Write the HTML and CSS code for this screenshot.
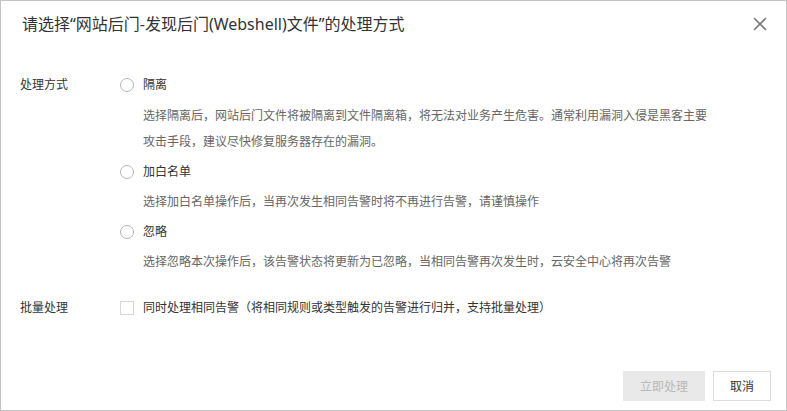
FILE: index.html
```html
<!DOCTYPE html>
<html lang="zh-CN">
<head>
<meta charset="utf-8">
<title>处理方式</title>
<link rel="stylesheet" href="styles.css">
</head>
<body>
<div class="dialog">
  <div class="dialog-header">
    <h1 class="dialog-title">请选择“网站后门-发现后门(Webshell)文件”的处理方式</h1>
    <button class="close" aria-label="关闭">
      <svg width="14" height="14" viewBox="0 0 14 14"><path d="M1 1L13 13M13 1L1 13" stroke="#7a7a7a" stroke-width="1.6" fill="none"/></svg>
    </button>
  </div>
  <div class="dialog-body">
    <div class="form-row">
      <div class="form-label">处理方式</div>
      <div class="form-control">
        <div class="option">
          <label class="radio-row"><span class="radio"></span><span class="radio-text">隔离</span></label>
          <p class="desc">选择隔离后，网站后门文件将被隔离到文件隔离箱，将无法对业务产生危害。通常利用漏洞入侵是黑客主要攻击手段，建议尽快修复服务器存在的漏洞。</p>
        </div>
        <div class="option">
          <label class="radio-row"><span class="radio"></span><span class="radio-text">加白名单</span></label>
          <p class="desc">选择加白名单操作后，当再次发生相同告警时将不再进行告警，请谨慎操作</p>
        </div>
        <div class="option">
          <label class="radio-row"><span class="radio"></span><span class="radio-text">忽略</span></label>
          <p class="desc">选择忽略本次操作后，该告警状态将更新为已忽略，当相同告警再次发生时，云安全中心将再次告警</p>
        </div>
      </div>
    </div>
    <div class="form-row batch-row">
      <div class="form-label">批量处理</div>
      <div class="form-control">
        <label class="radio-row"><span class="checkbox"></span><span class="radio-text">同时处理相同告警（将相同规则或类型触发的告警进行归并，支持批量处理）</span></label>
      </div>
    </div>
  </div>
  <div class="dialog-footer">
    <button class="btn btn-disabled" disabled>立即处理</button>
    <button class="btn btn-normal">取消</button>
  </div>
</div>
</body>
</html>
```

FILE: styles.css
```css
* { box-sizing: border-box; }
html, body { margin: 0; padding: 0; background: #fff; }
body {
  font-family: "Noto Sans", "Noto Sans CJK SC", sans-serif;
  color: #333;
  font-size: 12px;
}
.dialog {
  width: 787px;
  height: 411px;
  border: 1px solid #c3c3c3;
  display: flex;
  flex-direction: column;
  background: #fff;
}
.dialog-header {
  height: 46px;
  display: flex;
  align-items: center;
  justify-content: space-between;
  padding: 0 16px 0 21px;
}
.dialog-title {
  margin: 0;
  font-size: 16px;
  font-weight: normal;
  color: #333;
  line-height: 46px;
}
.close {
  border: 0;
  background: none;
  padding: 0;
  width: 20px;
  height: 20px;
  display: flex;
  align-items: center;
  justify-content: center;
  cursor: pointer;
}
.dialog-body {
  padding: 28px 0 0 19px;
}
.form-row {
  display: flex;
}
.form-label {
  width: 100px;
  line-height: 20px;
  color: #333;
}
.form-control {
  flex: 1;
}
.option + .option { margin-top: 7px; }
.radio-row {
  display: flex;
  align-items: center;
  height: 20px;
}
.radio {
  width: 14px;
  height: 14px;
  border: 1px solid #b5b5b5;
  border-radius: 50%;
  margin-right: 9px;
  flex: none;
}
.checkbox {
  width: 14px;
  height: 14px;
  border: 1px solid #d6d6d6;
  margin-right: 9px;
  flex: none;
}
.radio-text { color: #333; line-height: 20px; }
.desc {
  margin: 7px 0 0 23px;
  width: 570px;
  line-height: 26px;
  color: #666;
}
.option:first-child .desc { margin-top: 8px; }
.batch-row { margin-top: 23px; }
.dialog-footer {
  margin-top: auto;
  display: flex;
  justify-content: flex-end;
  gap: 8px;
  padding: 0 15px 9px 0;
}
.btn {
  height: 30px;
  padding: 0 16px;
  font-family: inherit;
  font-size: 12px;
  border: 1px solid #ddd;
  background: #fff;
  color: #333;
}
.btn-disabled {
  background: #e9e9e9;
  border-color: #e9e9e9;
  color: #b8b8b8;
}
```
